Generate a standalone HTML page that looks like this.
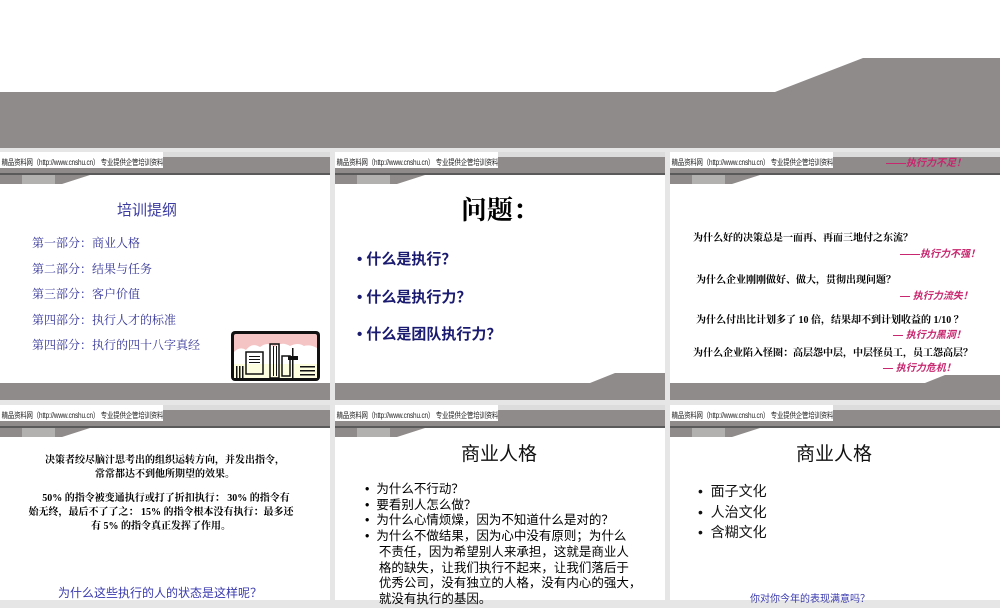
<!DOCTYPE html>
<html><head><meta charset="utf-8"><style>
*{margin:0;padding:0;box-sizing:border-box}
body{width:1000px;height:600px;overflow:hidden;background:#e6e6e6;position:relative;font-family:"Liberation Serif","Noto Serif CJK SC",serif}
.a{position:absolute;white-space:nowrap}
.lbl{position:absolute;left:0;top:5px;width:163px;height:16px;background:#fff;overflow:hidden;white-space:nowrap}
.lbl span{display:inline-block;font:8px "Liberation Sans","Noto Sans CJK SC",sans-serif;color:#222;line-height:16px;padding-left:2px;transform:scaleX(.8);transform-origin:0 50%;letter-spacing:-.2px}
.sans{font-family:"Liberation Sans","Noto Sans CJK SC",sans-serif}
.red{color:#c8266e;font-style:italic;font-weight:bold;font-size:10px;font-family:"Liberation Sans","Noto Sans CJK SC",sans-serif}
.b3{font-size:10px;color:#000;font-weight:bold;font-family:"Liberation Serif","Noto Serif CJK SC",serif}
</style></head><body>
<svg class="a" style="left:0;top:0" width="1000" height="152">
<rect width="1000" height="152" fill="#fff"/>
<polygon points="0,92 775,92 863,58 1000,58 1000,148 0,148" fill="#8f8b8a"/>
<rect y="148" width="1000" height="4" fill="#e6e6e6"/>
</svg>

<svg class="a" style="left:0;top:0" width="1000" height="600">
<defs>
<g id="hd">
<rect width="330" height="5" fill="#dcdcdc"/>
<rect y="5" width="330" height="16" fill="#8f8b8a"/>
<rect y="21" width="330" height="2" fill="#5a5a5a"/>
<polygon points="0,23 90,23 62,32 0,32" fill="#8f8b8a"/>
<rect x="22" y="23" width="33" height="9" fill="#b3b1b0"/>
</g>
</defs>
<rect x="0" y="152" width="330" height="248" fill="#fff"/>
<rect x="335" y="152" width="330" height="248" fill="#fff"/>
<rect x="670" y="152" width="330" height="248" fill="#fff"/>
<rect x="0" y="405" width="330" height="195" fill="#fff"/>
<rect x="335" y="405" width="330" height="195" fill="#fff"/>
<rect x="670" y="405" width="330" height="195" fill="#fff"/>
<use href="#hd" x="0" y="152"/><use href="#hd" x="335" y="152"/><use href="#hd" x="670" y="152"/>
<use href="#hd" x="0" y="405"/><use href="#hd" x="335" y="405"/><use href="#hd" x="670" y="405"/>
<rect x="0" y="383" width="330" height="17" fill="#8f8b8a"/>
<polygon points="335,383 590,383 615,373 665,373 665,400 335,400" fill="#8f8b8a"/>
<polygon points="670,383 925,383 945,375 1000,375 1000,400 670,400" fill="#8f8b8a"/>
<rect x="231" y="331" width="89" height="50" rx="4" fill="#111"/>
<rect x="234" y="334" width="83" height="44" rx="2" fill="#f4c4c4"/>
<path d="M234,352 q6,-6 12,-2 q6,-8 14,-3 q8,-6 14,0 q8,-6 16,-1 q8,-4 14,0 q6,-2 13,2 v30 h-83z" fill="#fff"/>
<rect x="234" y="364" width="83" height="14" fill="#fdfde0"/>
<g fill="#111">
<rect x="246" y="352" width="17" height="22" fill="none" stroke="#111" stroke-width="1.5"/>
<rect x="249" y="356" width="11" height="1"/><rect x="249" y="359" width="11" height="1"/><rect x="249" y="362" width="11" height="1"/>
<rect x="270" y="344" width="9" height="34" fill="none" stroke="#111" stroke-width="1.5"/>
<rect x="273" y="346" width="1" height="30"/><rect x="276" y="346" width="1" height="30"/>
<rect x="282" y="356" width="8" height="20" fill="none" stroke="#111" stroke-width="1.5"/>
<rect x="292" y="348" width="1.5" height="30"/>
<rect x="288" y="356" width="10" height="4"/>
<rect x="300" y="366" width="15" height="1.5"/><rect x="300" y="370" width="15" height="1.5"/><rect x="300" y="374" width="15" height="1.5"/>
<rect x="236" y="366" width="1.5" height="12"/><rect x="239" y="366" width="1.5" height="12"/><rect x="242" y="366" width="1.5" height="12"/>
</g>
</svg>

<div class="lbl" style="left:0;top:152px"><span>精品资料网（http://www.cnshu.cn） 专业提供企管培训资料</span></div>
<div class="lbl" style="left:335px;top:152px"><span>精品资料网（http://www.cnshu.cn） 专业提供企管培训资料</span></div>
<div class="lbl" style="left:670px;top:152px"><span>精品资料网（http://www.cnshu.cn） 专业提供企管培训资料</span></div>
<div class="lbl" style="left:0;top:405px"><span>精品资料网（http://www.cnshu.cn） 专业提供企管培训资料</span></div>
<div class="lbl" style="left:335px;top:405px"><span>精品资料网（http://www.cnshu.cn） 专业提供企管培训资料</span></div>
<div class="lbl" style="left:670px;top:405px"><span>精品资料网（http://www.cnshu.cn） 专业提供企管培训资料</span></div>

<div class="a sans" style="left:117px;top:199px;font-size:15px;color:#3a3aa0">培训提纲</div>
<div class="a" style="left:32px;top:231px;font-size:12px;color:#333399;line-height:25.5px">第一部分：商业人格<br>第二部分：结果与任务<br>第三部分：客户价值<br>第四部分：执行人才的标准<br>第四部分：执行的四十八字真经</div>

<div class="a" style="left:461px;top:190px;font-size:26px;font-weight:bold;color:#000">问题：</div>
<div class="a sans" style="left:357px;top:241px;font-size:15px;font-weight:bold;color:#1a1a70;line-height:37.5px">• 什么是执行？<br>• 什么是执行力？<br>• 什么是团队执行力？</div>

<div class="a red" style="left:886px;top:154px">——执行力不足！</div>
<div class="a b3" style="left:693px;top:229px">为什么好的决策总是一而再、再而三地付之东流？</div>
<div class="a red" style="left:900px;top:245px">——执行力不强！</div>
<div class="a b3" style="left:696px;top:271px">为什么企业刚刚做好、做大，贯彻出现问题？</div>
<div class="a red" style="left:900px;top:287px">— 执行力流失！</div>
<div class="a b3" style="left:696px;top:311px">为什么付出比计划多了 10 倍，结果却不到计划收益的 1/10 ？</div>
<div class="a red" style="left:893px;top:326px">— 执行力黑洞！</div>
<div class="a b3" style="left:693px;top:344px">为什么企业陷入怪圈：高层怨中层，中层怪员工，员工怨高层？</div>
<div class="a red" style="left:883px;top:359px">— 执行力危机！</div>

<div class="a b3" style="left:0;width:330px;top:454px;text-align:center;line-height:14px">决策者绞尽脑汁思考出的组织运转方向，并发出指令，<br>常常都达不到他所期望的效果。</div>
<div class="a b3" style="left:0;width:322px;top:492px;text-align:center;line-height:14px">&nbsp;&nbsp;&nbsp;&nbsp;50% 的指令被变通执行或打了折扣执行： 30% 的指令有<br>始无终，最后不了了之： 15% 的指令根本没有执行：最多还<br>有 5% 的指令真正发挥了作用。</div>
<div class="a sans" style="left:58px;top:584px;font-size:12px;color:#3a3ab0">为什么这些执行的人的状态是这样呢？</div>

<div class="a sans" style="left:461px;top:439px;font-size:19px;color:#111">商业人格</div>
<div class="a sans" style="left:365px;top:482px;font-size:12.5px;color:#000;line-height:15.7px">•&nbsp; 为什么不行动？<br>•&nbsp; 要看别人怎么做？<br>•&nbsp; 为什么心情烦燥，因为不知道什么是对的？<br>•&nbsp; 为什么不做结果，因为心中没有原则；为什么<br>&nbsp;&nbsp;&nbsp; 不责任，因为希望别人来承担，这就是商业人<br>&nbsp;&nbsp;&nbsp; 格的缺失，让我们执行不起来，让我们落后于<br>&nbsp;&nbsp;&nbsp; 优秀公司，没有独立的人格，没有内心的强大，<br>&nbsp;&nbsp;&nbsp; 就没有执行的基因。</div>

<div class="a sans" style="left:796px;top:439px;font-size:19px;color:#111">商业人格</div>
<div class="a sans" style="left:698px;top:481px;font-size:14px;color:#111;line-height:20.5px">•&nbsp; 面子文化<br>•&nbsp; 人治文化<br>•&nbsp; 含糊文化</div>
<div class="a sans" style="left:750px;top:590px;font-size:10px;color:#3a3ab0">你对你今年的表现满意吗？</div>
</body></html>
